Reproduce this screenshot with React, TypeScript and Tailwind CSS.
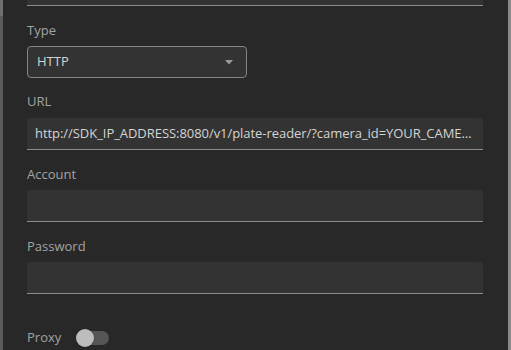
function Label({ children }: { children: string }) {
  return <div className="text-[13px] leading-[18px] text-[#a3a3a3]">{children}</div>;
}

function TextField({ value }: { value?: string }) {
  return (
    <div className="h-8 bg-[#333333] rounded-t border-b border-[#8c8c8c] pl-2 pr-[5px] flex items-center min-w-0">
      <span className="block min-w-0 text-[13px] tracking-[-0.05px] text-[#d4d4d4] truncate">{value}</span>
    </div>
  );
}

export default function App() {
  return (
    <div className="w-[511px] h-[350px] overflow-hidden flex bg-[#5c5c5c]" style={{ fontFamily: '"Open Sans", sans-serif' }}>
      <div className="w-[3px] shrink-0 flex flex-col">
        <div className="h-4 bg-[#707070]" />
        <div className="flex-1 bg-[#5a5a5a]" />
      </div>
      <div className="flex-1 min-w-0 bg-[#282828] pl-6 pr-[25px]">
        <div className="h-[6px] bg-[#333333] border-b border-[#8c8c8c]" />

        <div className="mt-[15px]">
          <Label>Type</Label>
          <div className="mt-[7px] w-[220px] h-8 rounded border border-[#858585] bg-[#333333] flex items-center justify-between pl-[9px] pr-[12px]">
            <span className="text-[13px] text-[#d4d4d4]">HTTP</span>
            <svg width="10" height="5" viewBox="0 0 10 5">
              <path d="M1 0 L9 0 L5 4.5 Z" fill="#9a9a9a" />
            </svg>
          </div>
        </div>

        <div className="mt-[14px]">
          <Label>URL</Label>
          <div className="mt-2">
            <TextField value="http://SDK_IP_ADDRESS:8080/v1/plate-reader/?camera_id=YOUR_CAMERA_ID" />
          </div>
        </div>

        <div className="mt-[15px]">
          <Label>Account</Label>
          <div className="mt-[7px]">
            <TextField />
          </div>
        </div>

        <div className="mt-[15px]">
          <Label>Password</Label>
          <div className="mt-[7px]">
            <TextField />
          </div>
        </div>

        <div className="mt-[34px] flex items-center gap-[15px]">
          <span className="text-[13px] text-[#a3a3a3]">Proxy</span>
          <div className="relative w-[34px] h-[18px] flex items-center">
            <div className="ml-[1px] w-[32px] h-[14px] rounded-full bg-[#555555]" />
            <div className="absolute left-0 top-0 w-[18px] h-[18px] rounded-full bg-[#bdbdbd] shadow" />
          </div>
        </div>
      </div>
      <div className="w-[3px] shrink-0 bg-[#8a8a8a]" />
    </div>
  );
}
